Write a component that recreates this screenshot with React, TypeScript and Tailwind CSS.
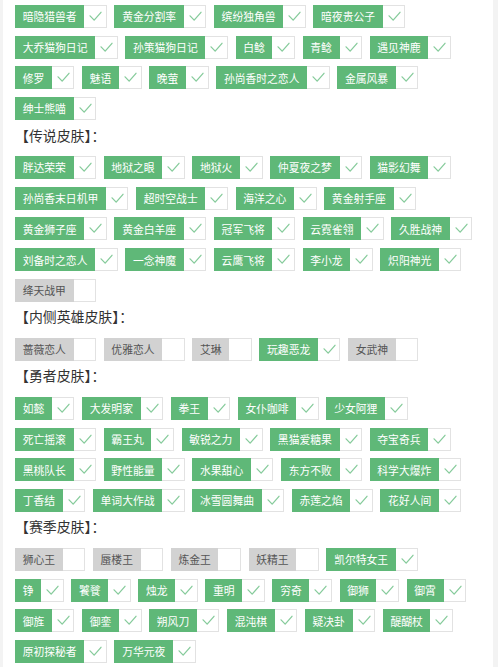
import React from "react"

type Skin = { name: string; on: boolean }

const on = (names: string[]): Skin[] => names.map((name) => ({ name, on: true }))
const off = (names: string[]): Skin[] => names.map((name) => ({ name, on: false }))

const sections: { title?: string; rows: Skin[][] }[] = [
  {
    rows: [
      on(["暗隐猎兽者", "黄金分割率", "缤纷独角兽", "暗夜贵公子"]),
      on(["大乔猫狗日记", "孙策猫狗日记", "白鲶", "青鲶", "遇见神鹿"]),
      on(["修罗", "魅语", "晚萤", "孙尚香时之恋人", "金属风暴"]),
      on(["绅士熊喵"]),
    ],
  },
  {
    title: "【传说皮肤】：",
    rows: [
      on(["胖达荣荣", "地狱之眼", "地狱火", "仲夏夜之梦", "猫影幻舞"]),
      on(["孙尚香末日机甲", "超时空战士", "海洋之心", "黄金射手座"]),
      on(["黄金狮子座", "黄金白羊座", "冠军飞将", "云霓雀翎", "久胜战神"]),
      on(["刘备时之恋人", "一念神魔", "云鹰飞将", "李小龙", "炽阳神光"]),
      off(["绛天战甲"]),
    ],
  },
  {
    title: "【内侧英雄皮肤】：",
    rows: [
      [
        ...off(["蔷薇恋人", "优雅恋人", "艾琳"]),
        ...on(["玩趣恶龙"]),
        ...off(["女武神"]),
      ],
    ],
  },
  {
    title: "【勇者皮肤】：",
    rows: [
      on(["如懿", "大发明家", "拳王", "女仆咖啡", "少女阿狸"]),
      on(["死亡摇滚", "霸王丸", "敏锐之力", "黑猫爱糖果", "夺宝奇兵"]),
      on(["黑桃队长", "野性能量", "水果甜心", "东方不败", "科学大爆炸"]),
      on(["丁香结", "单词大作战", "冰雪圆舞曲", "赤莲之焰", "花好人间"]),
    ],
  },
  {
    title: "【赛季皮肤】：",
    rows: [
      [...off(["狮心王", "蜃楼王", "炼金王", "妖精王"]), ...on(["凯尔特女王"])],
      on(["铮", "饕餮", "烛龙", "重明", "穷奇", "御狮", "御霄"]),
      on(["御旌", "御銮", "朔风刀", "混沌棋", "疑决卦", "醍醐杖"]),
      on(["原初探秘者", "万华元夜"]),
    ],
  },
]

function Check() {
  return (
    <svg width="22" height="23" viewBox="0 0 22 23" fill="none">
      <polyline
        points="6.2,10.8 10.4,15.2 17.4,7.2"
        stroke="#86cb9b"
        strokeWidth="1.3"
        strokeLinecap="round"
        strokeLinejoin="round"
      />
    </svg>
  )
}

function SkinBox({ skin }: { skin: Skin }) {
  return (
    <div className="flex h-[23px]">
      <span
        className={
          skin.on
            ? "flex items-center whitespace-nowrap bg-[#5fb878] px-[7.7px] text-[10.8px] text-white"
            : "flex items-center whitespace-nowrap bg-[#d2d2d2] px-[7.7px] text-[10.8px] text-[#555]"
        }
      >
        {skin.name}
      </span>
      <span className="flex w-[22.5px] items-center justify-center border border-l-0 border-[#e2e2e2] bg-white">
        {skin.on && <Check />}
      </span>
    </div>
  )
}

export default function App() {
  return (
    <div
      className="flex min-h-screen bg-[#f3f3f3]"
      style={{ fontFamily: '"Noto Sans CJK SC", "Noto Sans", sans-serif' }}
    >
      <div className="ml-[3px] w-[490px] bg-white pl-[12px] pt-[5px] pb-4">
        {sections.map((section, i) => (
          <div key={i}>
            {section.title && (
              <div className="mt-[4.5px] mb-[11.5px] h-[20px] text-[13.9px] leading-[20px] text-[#333]">
                {section.title}
              </div>
            )}
            <div className="flex flex-col gap-[7.7px]">
              {section.rows.map((row, j) => (
                <div key={j} className="flex gap-[7.6px]">
                  {row.map((skin) => (
                    <SkinBox key={skin.name} skin={skin} />
                  ))}
                </div>
              ))}
            </div>
          </div>
        ))}
      </div>
    </div>
  )
}
